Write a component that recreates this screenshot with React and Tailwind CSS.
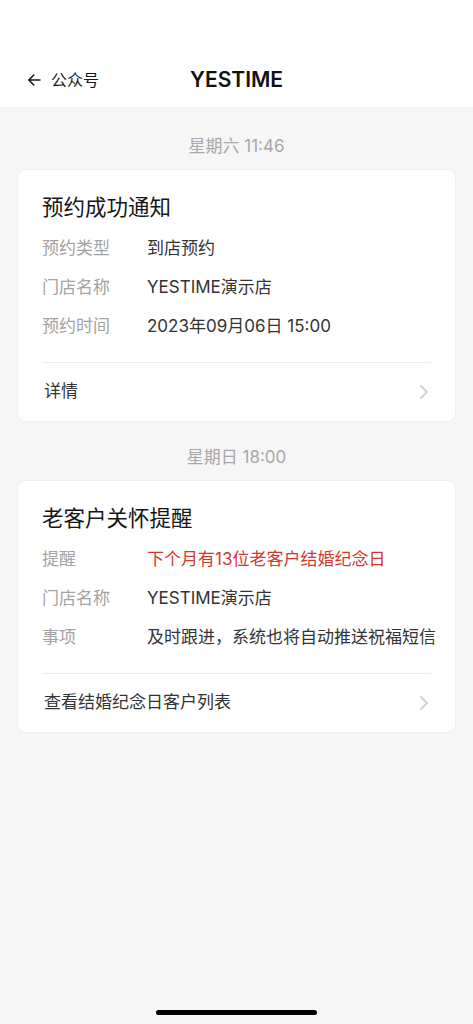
import React from 'react';

const font = { fontFamily: 'Inter, "Noto Sans CJK SC", sans-serif' };

const messages = [
  {
    time: '星期六 11:46',
    gap: 'pt-[27px]',
    title: '预约成功通知',
    rows: [
      { label: '预约类型', value: '到店预约' },
      { label: '门店名称', value: 'YESTIME演示店' },
      { label: '预约时间', value: '2023年09月06日 15:00' },
    ],
    link: '详情',
  },
  {
    time: '星期日 18:00',
    gap: 'pt-[24px]',
    title: '老客户关怀提醒',
    rows: [
      { label: '提醒', value: '下个月有13位老客户结婚纪念日', red: true },
      { label: '门店名称', value: 'YESTIME演示店' },
      { label: '事项', value: '及时跟进，系统也将自动推送祝福短信' },
    ],
    link: '查看结婚纪念日客户列表',
  },
];

const BackArrow = () => (
  <svg width="14" height="14" viewBox="0 0 14 14" fill="none">
    <path d="M13 7H1.8M6.8 2L1.8 7L6.8 12" stroke="#1a1a1a" strokeWidth="1.6" strokeLinecap="round" strokeLinejoin="round" />
  </svg>
);

const Chevron = () => (
  <svg width="10" height="16" viewBox="0 0 10 16" fill="none">
    <path d="M2 2L8 8L2 14" stroke="#d2d2d2" strokeWidth="2" strokeLinecap="round" strokeLinejoin="round" />
  </svg>
);

const MessageCard = ({ msg }) => (
  <div>
    <div className={`${msg.gap} pb-[12px] text-center text-[17px] leading-[24px] text-[#a8a8a8]`}>{msg.time}</div>
    <div className="mx-[18px] rounded-[8px] bg-white px-6 pt-[22px] shadow-[0_0_0_1px_#efefef]">
      <div className="h-[30px] text-[21.5px] leading-[30px] text-[#161616]">{msg.title}</div>
      <div className="mt-[7px]">
        {msg.rows.map((row) => (
          <div key={row.label} className="flex h-[39px] items-center text-[17px] whitespace-nowrap">
            <span className="w-[105px] shrink-0 text-[#a3a3a3]">{row.label}</span>
            <span className={row.red ? 'text-[#d0392e]' : 'text-[#333333]'}>{row.value}</span>
          </div>
        ))}
      </div>
      <div className="mt-[16px] h-px bg-[#ececec]" />
      <div className="flex h-[58px] items-center justify-between pl-[2px] pr-[2px]">
        <span className="text-[17px] text-[#333333]">{msg.link}</span>
        <Chevron />
      </div>
    </div>
  </div>
);

const App = () => {
  return (
    <div className="flex min-h-[1024px] flex-col bg-[#f6f6f6]" style={font}>
      <div className="h-[107px] bg-white pt-[60px]">
        <div className="grid h-[40px] grid-cols-[1fr_auto_1fr] items-center">
          <div className="flex items-center gap-[10px] pl-[27px]">
            <BackArrow />
            <span className="text-[16px] text-[#1a1a1a]">公众号</span>
          </div>
          <div className="text-[21px] font-semibold text-[#111111]">YESTIME</div>
          <div />
        </div>
      </div>

      {messages.map((msg) => (
        <MessageCard key={msg.time} msg={msg} />
      ))}

      <div className="mt-auto flex justify-center pb-[9px]">
        <div className="h-[5px] w-[161px] rounded-full bg-black" />
      </div>
    </div>
  );
};

export default App;
